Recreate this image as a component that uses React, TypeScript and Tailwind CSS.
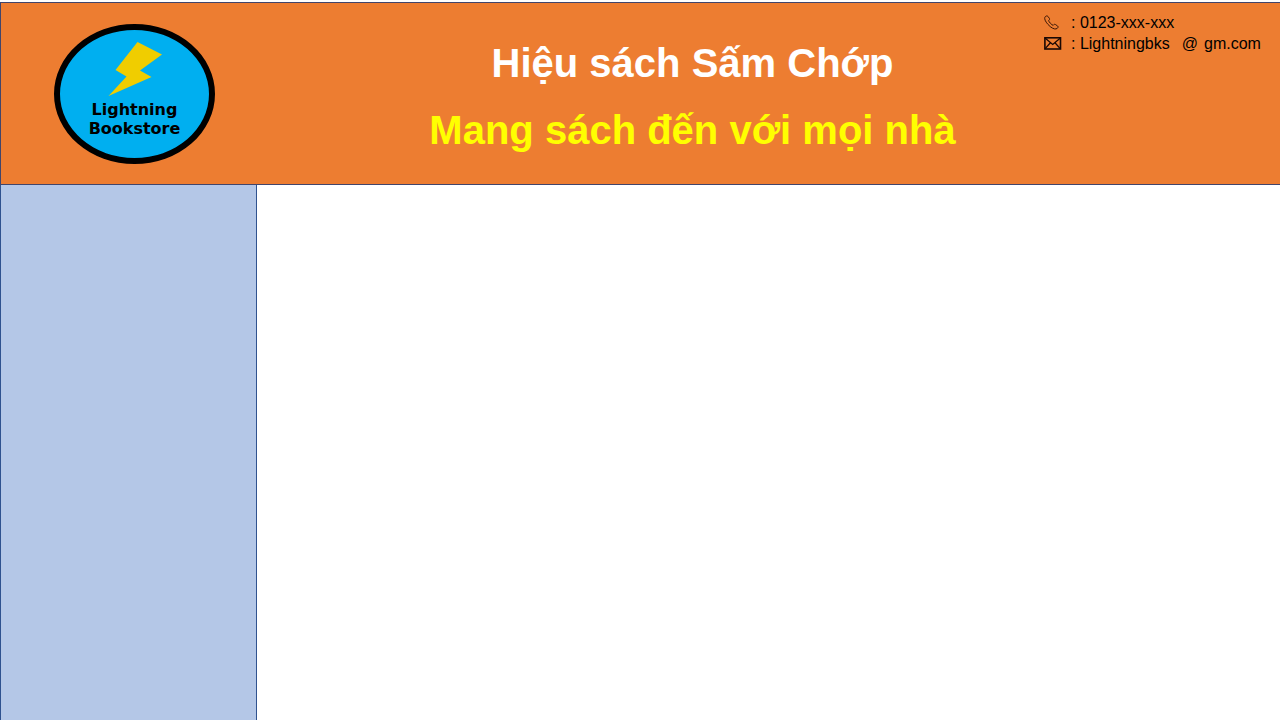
function StoreLogo() {
  return (
    <div className="flex h-[140px] w-[161px] flex-col items-center rounded-[50%] border-6 border-black bg-[#00aff0] pt-[11px]">
      <svg viewBox="0 0 54 56" className="h-[56px] w-[54px]" aria-hidden="true">
        <path
          d="M29.500 1 L54 13.500 L32 29.500 L43.500 36 L0.500 55 L18.500 35.500 L7.500 29 Z"
          fill="#f0cd00"
        />
      </svg>
      <p className="mt-[3px] text-center font-['DejaVu_Sans',sans-serif] text-base leading-[19px] font-bold text-black">
        Lightning
        <br />
        Bookstore
      </p>
    </div>
  );
}

function PhoneIcon() {
  return (
    <svg viewBox="0 0 16 16" className="h-4 w-4" fill="none" stroke="#3a1606" strokeWidth="1" strokeLinejoin="round" aria-hidden="true">
      <path d="M1.200 1.800 C2 0.800 3.200 0.600 3.900 1.400 L5.400 3.400 C5.900 4.200 5.500 4.800 4.700 5.500 C4.500 6.500 7.800 10.200 9.200 10.300 C9.900 9.400 10.600 9 11.400 9.500 L13.600 11 C14.400 11.700 14.100 12.600 13.300 13.300 C11.800 14.600 9.300 14.100 6.200 11.600 C2.700 8.600 0.900 5.500 0.700 3.600 C0.600 2.900 0.800 2.300 1.200 1.800 Z" />
    </svg>
  );
}

function MailIcon() {
  return (
    <svg viewBox="0 0 18 14" className="h-[14px] w-[18px]" fill="none" stroke="#1a0804" strokeWidth="1.6" aria-hidden="true">
      <rect x="0.900" y="0.800" width="15.600" height="11.200" />
      <path d="M1 1 L8.700 7.500 L16.400 1 M1.200 11.600 L6.400 5.800 M16.200 11.600 L11 5.800" strokeWidth="1.300" />
    </svg>
  );
}

export default function App() {
  return (
    <div className="flex min-h-screen flex-col bg-white pt-[2px] font-['Liberation_Sans',Arial,sans-serif]">
      <header className="flex h-[183px] shrink-0 border border-r-0 border-[#41456b] bg-[#ed7d31]">
        <div className="w-[340px] shrink-0 pt-[21px] pl-[53px]">
          <StoreLogo />
        </div>
        <div className="flex-1 pt-[27px] text-center text-[40px] leading-[67px] font-bold whitespace-nowrap">
          <h1 className="text-white">Hiệu sách Sấm Chớp</h1>
          <p className="text-[#ffff00]">Mang sách đến với mọi nhà</p>
        </div>
        <address className="w-[236px] shrink-0 pt-[9px] text-base leading-[21px] whitespace-nowrap text-black not-italic">
          <div className="flex items-center">
            <span className="w-[27px]"><PhoneIcon /></span>
            <span>: 0123-xxx-xxx</span>
          </div>
          <div className="flex items-center">
            <span className="w-[27px]"><MailIcon /></span>
            <span className="flex gap-3">
              <span>: Lightningbks</span>
              <span className="flex gap-[6px]">
                <span>@</span>
                <span>gm.com</span>
              </span>
            </span>
          </div>
        </address>
      </header>
      <div className="flex flex-1">
        <aside className="w-[257px] shrink-0 border-x border-[#2f528f] bg-[#b4c7e7]" />
        <main className="flex-1" />
      </div>
    </div>
  );
}
